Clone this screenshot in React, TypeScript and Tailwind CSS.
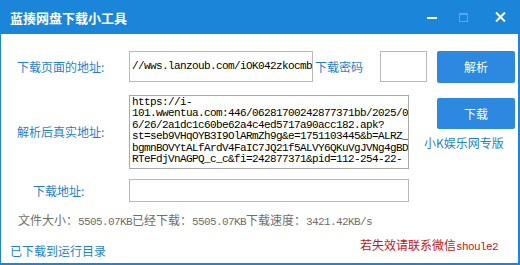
import React from "react";

const cjk = { fontFamily: '"Noto Sans CJK SC", "Noto Sans", sans-serif' };
const mono = {
  fontFamily: '"Liberation Mono", "Noto Sans CJK SC", monospace',
  fontSize: "11px",
  letterSpacing: "-0.6px",
};

function M({ children }: { children: React.ReactNode }) {
  return <span style={mono}>{children}</span>;
}

export default function App() {
  const lines = [
    "https://i-",
    "101.wwentua.com:446/06281700242877371bb/2025/0",
    "6/26/2a1dc1c60be62a4c4ed5717a90acc182.apk?",
    "st=seb9VHqOYB3I9OlARmZh9g&e=1751103445&b=ALRZ_",
    "bgmnBOVYtALfArdV4FaIC7JQ21f5ALVY6QKuVgJVNg4gBD",
    "RTeFdjVnAGPQ_c_c&fi=242877371&pid=112-254-22-",
  ];
  return (
    <div className="w-[520px] h-[265px] flex flex-col bg-white overflow-hidden" style={cjk}>
      <div className="h-[34px] bg-[#1a85d9] flex items-center shrink-0">
        <div className="pl-[10px] text-white text-[13px] font-semibold leading-none">
          蓝揍网盘下载小工具
        </div>
        <div className="ml-auto flex items-center pr-[14px]">
          <svg width="10" height="10" viewBox="0 0 10 10">
            <rect x="0" y="5" width="10" height="2" fill="#ffffff" />
          </svg>
          <svg className="ml-[22px]" width="9" height="9" viewBox="0 0 9 9">
            <rect x="0.5" y="0.5" width="8" height="8" fill="none" stroke="#5fa8e8" strokeWidth="1" />
            <rect x="0" y="0" width="9" height="2" fill="#5fa8e8" />
          </svg>
          <svg className="ml-[27px]" width="11" height="10" viewBox="0 0 11 10">
            <path d="M1 0.5 L10 9.5 M10 0.5 L1 9.5" stroke="#ffffff" strokeWidth="2" />
          </svg>
        </div>
      </div>
      <div className="flex-1 flex flex-col border-l border-r-2 border-b-2 border-[#1a85d9] min-h-0">
        {/* Row 1 */}
        <div className="flex items-center h-[33px] mt-[16px]">
          <div className="w-[128px] pl-[16px] text-[12px] text-[#1f7fcf]">下载页面的地址:</div>
          <div className="w-[184px] h-[31px] border border-[#b9b9b9] flex items-center pl-[2px] overflow-hidden whitespace-nowrap text-black">
            <M>//wws.lanzoub.com/iOK042zkocmb</M>
          </div>
          <div className="ml-[2px] text-[12px] text-[#1f7fcf]">下载密码</div>
          <div className="ml-[17px] w-[47px] h-[31px] border border-[#b9b9b9]" />
          <div className="ml-[10px] w-[78px] h-[32px] bg-[#2d88e0] rounded-[2px] flex items-center justify-center text-white text-[12px]">
            解析
          </div>
        </div>
        {/* Row 2 */}
        <div className="flex mt-[12px]">
          <div className="w-[128px] pl-[16px] h-[74px] flex items-center text-[12px] text-[#1f7fcf]">
            解析后真实地址:
          </div>
          <div className="w-[280px] h-[74px] border border-[#a9a9a9] pl-[2px] pt-[1px] overflow-hidden text-black">
            {lines.map((l, i) => (
              <div key={i} className="whitespace-pre leading-[11.4px]" style={mono}>
                {l}
              </div>
            ))}
          </div>
          <div className="ml-[15px] flex flex-col">
            <div className="ml-[13px] mt-[3px] w-[78px] h-[31px] bg-[#2d88e0] rounded-[2px] flex items-center justify-center text-white text-[12px]">
              下载
            </div>
            <div className="mt-[6px] text-[12px] text-[#1f7fcf] leading-[16px] whitespace-nowrap">
              小K娱乐网专版
            </div>
          </div>
        </div>
        {/* Row 3 */}
        <div className="flex items-center mt-[10px]">
          <div className="w-[128px] pl-[32px] text-[12px] text-[#1f7fcf]">下载地址:</div>
          <div className="w-[280px] h-[23px] border border-[#b9b9b9]" />
        </div>
        {/* Row 4 */}
        <div className="mt-[10px] pl-[17px] text-[12px] leading-[16px] text-[#6e6e6e] whitespace-nowrap">
          文件大小：<M>5505.07KB</M>已经下载：<M>5505.07KB</M>下载速度：<M>3421.42KB/s</M>
        </div>
        {/* Row 5 */}
        <div className="flex justify-between items-start pr-[20px]">
          <div className="mt-[13px] pl-[9px] text-[12px] leading-[16px] text-[#1f7fcf] whitespace-nowrap">
            已下载到运行目录
          </div>
          <div className="mt-[7px] text-[12px] leading-[16px] text-[#cc1111] whitespace-nowrap">
            若失效请联系微信<M>shoule2</M>
          </div>
        </div>
      </div>
    </div>
  );
}
